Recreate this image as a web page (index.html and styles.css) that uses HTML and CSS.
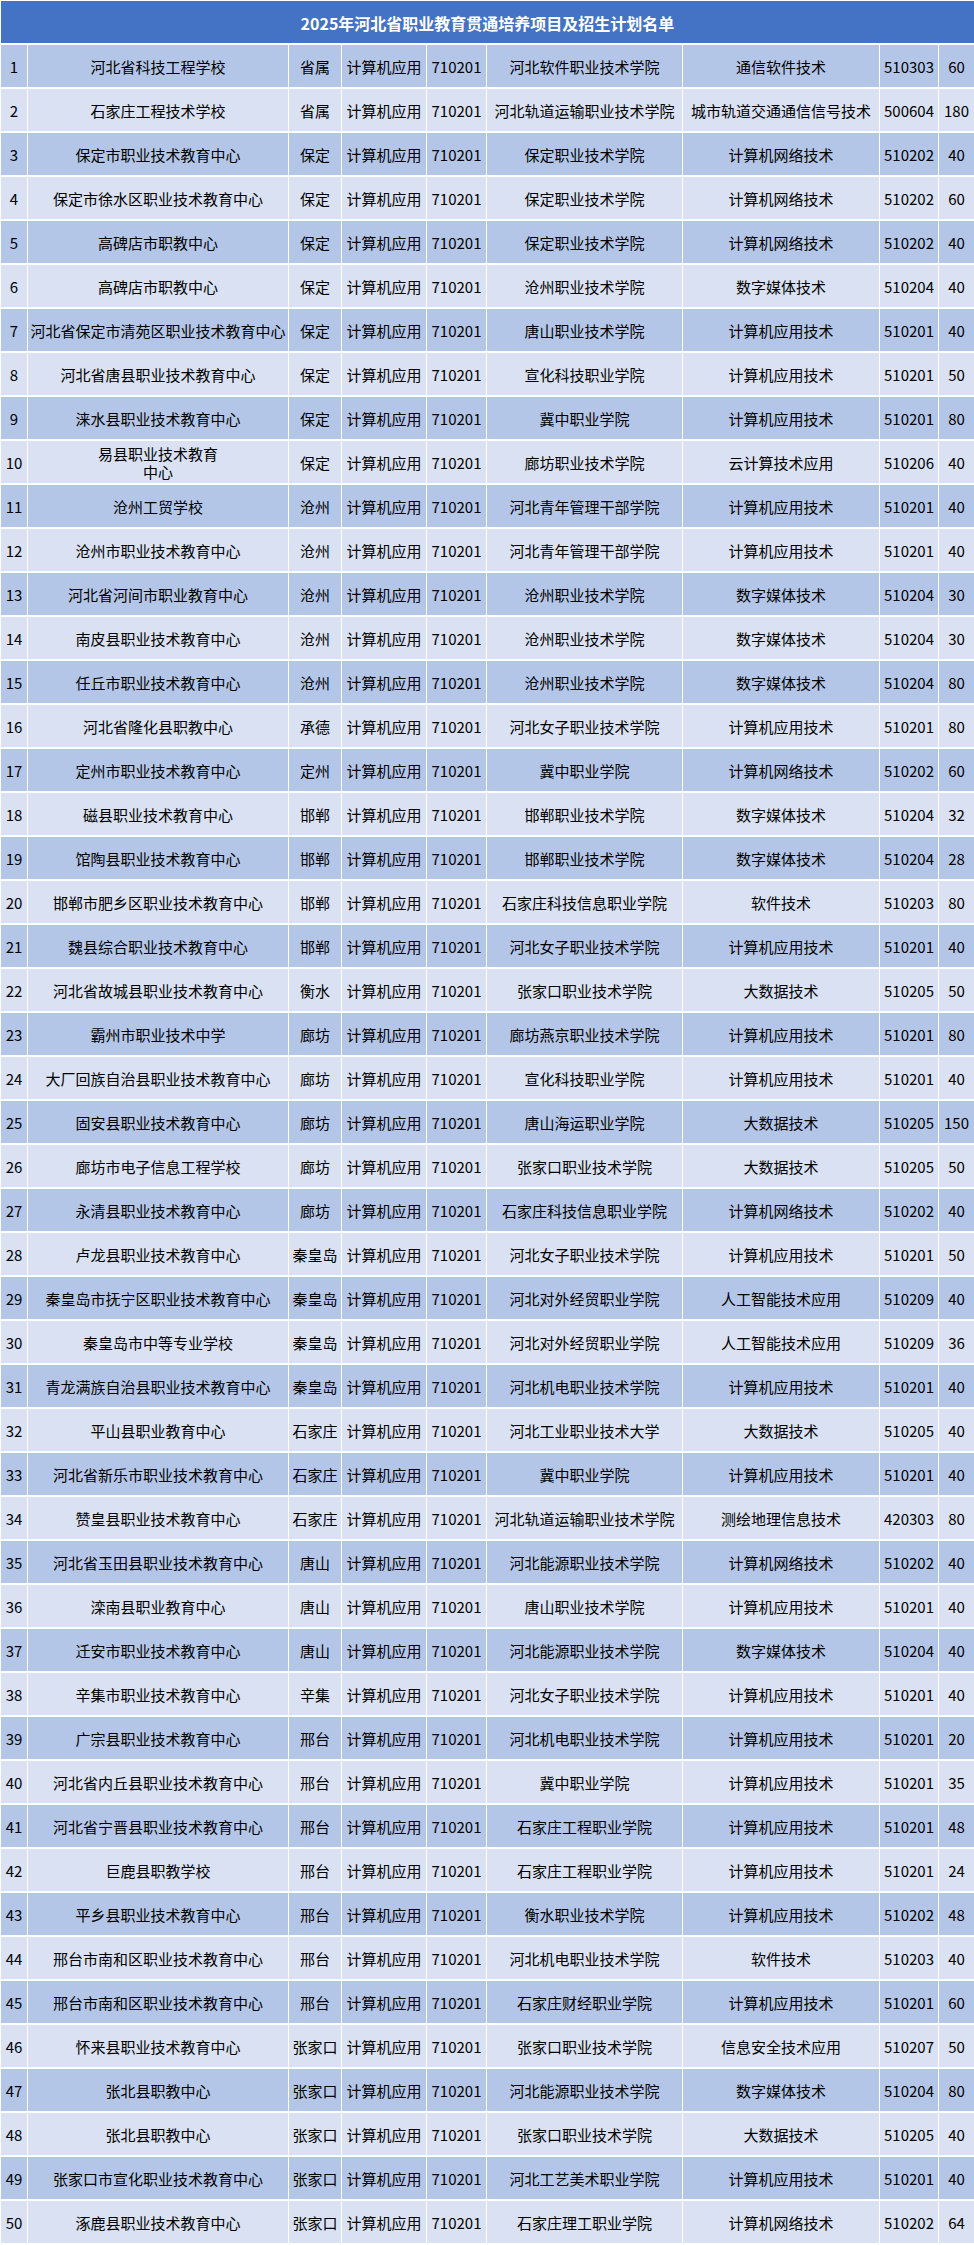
FILE: index.html
```html
<!DOCTYPE html>
<html lang="zh-CN">
<head>
<meta charset="utf-8">
<title>2025年河北省职业教育贯通培养项目及招生计划名单</title>
<link rel="stylesheet" href="styles.css">
</head>
<body>
<div class="sheet">
  <div class="title">2025年河北省职业教育贯通培养项目及招生计划名单</div>
  <div class="row odd"><div>1</div><div>河北省科技工程学校</div><div>省属</div><div>计算机应用</div><div>710201</div><div>河北软件职业技术学院</div><div>通信软件技术</div><div>510303</div><div>60</div></div>
  <div class="row even"><div>2</div><div>石家庄工程技术学校</div><div>省属</div><div>计算机应用</div><div>710201</div><div>河北轨道运输职业技术学院</div><div>城市轨道交通通信信号技术</div><div>500604</div><div>180</div></div>
  <div class="row odd"><div>3</div><div>保定市职业技术教育中心</div><div>保定</div><div>计算机应用</div><div>710201</div><div>保定职业技术学院</div><div>计算机网络技术</div><div>510202</div><div>40</div></div>
  <div class="row even"><div>4</div><div>保定市徐水区职业技术教育中心</div><div>保定</div><div>计算机应用</div><div>710201</div><div>保定职业技术学院</div><div>计算机网络技术</div><div>510202</div><div>60</div></div>
  <div class="row odd"><div>5</div><div>高碑店市职教中心</div><div>保定</div><div>计算机应用</div><div>710201</div><div>保定职业技术学院</div><div>计算机网络技术</div><div>510202</div><div>40</div></div>
  <div class="row even"><div>6</div><div>高碑店市职教中心</div><div>保定</div><div>计算机应用</div><div>710201</div><div>沧州职业技术学院</div><div>数字媒体技术</div><div>510204</div><div>40</div></div>
  <div class="row odd"><div>7</div><div>河北省保定市清苑区职业技术教育中心</div><div>保定</div><div>计算机应用</div><div>710201</div><div>唐山职业技术学院</div><div>计算机应用技术</div><div>510201</div><div>40</div></div>
  <div class="row even"><div>8</div><div>河北省唐县职业技术教育中心</div><div>保定</div><div>计算机应用</div><div>710201</div><div>宣化科技职业学院</div><div>计算机应用技术</div><div>510201</div><div>50</div></div>
  <div class="row odd"><div>9</div><div>涞水县职业技术教育中心</div><div>保定</div><div>计算机应用</div><div>710201</div><div>冀中职业学院</div><div>计算机应用技术</div><div>510201</div><div>80</div></div>
  <div class="row even"><div>10</div><div>易县职业技术教育<br>中心</div><div>保定</div><div>计算机应用</div><div>710201</div><div>廊坊职业技术学院</div><div>云计算技术应用</div><div>510206</div><div>40</div></div>
  <div class="row odd"><div>11</div><div>沧州工贸学校</div><div>沧州</div><div>计算机应用</div><div>710201</div><div>河北青年管理干部学院</div><div>计算机应用技术</div><div>510201</div><div>40</div></div>
  <div class="row even"><div>12</div><div>沧州市职业技术教育中心</div><div>沧州</div><div>计算机应用</div><div>710201</div><div>河北青年管理干部学院</div><div>计算机应用技术</div><div>510201</div><div>40</div></div>
  <div class="row odd"><div>13</div><div>河北省河间市职业教育中心</div><div>沧州</div><div>计算机应用</div><div>710201</div><div>沧州职业技术学院</div><div>数字媒体技术</div><div>510204</div><div>30</div></div>
  <div class="row even"><div>14</div><div>南皮县职业技术教育中心</div><div>沧州</div><div>计算机应用</div><div>710201</div><div>沧州职业技术学院</div><div>数字媒体技术</div><div>510204</div><div>30</div></div>
  <div class="row odd"><div>15</div><div>任丘市职业技术教育中心</div><div>沧州</div><div>计算机应用</div><div>710201</div><div>沧州职业技术学院</div><div>数字媒体技术</div><div>510204</div><div>80</div></div>
  <div class="row even"><div>16</div><div>河北省隆化县职教中心</div><div>承德</div><div>计算机应用</div><div>710201</div><div>河北女子职业技术学院</div><div>计算机应用技术</div><div>510201</div><div>80</div></div>
  <div class="row odd"><div>17</div><div>定州市职业技术教育中心</div><div>定州</div><div>计算机应用</div><div>710201</div><div>冀中职业学院</div><div>计算机网络技术</div><div>510202</div><div>60</div></div>
  <div class="row even"><div>18</div><div>磁县职业技术教育中心</div><div>邯郸</div><div>计算机应用</div><div>710201</div><div>邯郸职业技术学院</div><div>数字媒体技术</div><div>510204</div><div>32</div></div>
  <div class="row odd"><div>19</div><div>馆陶县职业技术教育中心</div><div>邯郸</div><div>计算机应用</div><div>710201</div><div>邯郸职业技术学院</div><div>数字媒体技术</div><div>510204</div><div>28</div></div>
  <div class="row even"><div>20</div><div>邯郸市肥乡区职业技术教育中心</div><div>邯郸</div><div>计算机应用</div><div>710201</div><div>石家庄科技信息职业学院</div><div>软件技术</div><div>510203</div><div>80</div></div>
  <div class="row odd"><div>21</div><div>魏县综合职业技术教育中心</div><div>邯郸</div><div>计算机应用</div><div>710201</div><div>河北女子职业技术学院</div><div>计算机应用技术</div><div>510201</div><div>40</div></div>
  <div class="row even"><div>22</div><div>河北省故城县职业技术教育中心</div><div>衡水</div><div>计算机应用</div><div>710201</div><div>张家口职业技术学院</div><div>大数据技术</div><div>510205</div><div>50</div></div>
  <div class="row odd"><div>23</div><div>霸州市职业技术中学</div><div>廊坊</div><div>计算机应用</div><div>710201</div><div>廊坊燕京职业技术学院</div><div>计算机应用技术</div><div>510201</div><div>80</div></div>
  <div class="row even"><div>24</div><div>大厂回族自治县职业技术教育中心</div><div>廊坊</div><div>计算机应用</div><div>710201</div><div>宣化科技职业学院</div><div>计算机应用技术</div><div>510201</div><div>40</div></div>
  <div class="row odd"><div>25</div><div>固安县职业技术教育中心</div><div>廊坊</div><div>计算机应用</div><div>710201</div><div>唐山海运职业学院</div><div>大数据技术</div><div>510205</div><div>150</div></div>
  <div class="row even"><div>26</div><div>廊坊市电子信息工程学校</div><div>廊坊</div><div>计算机应用</div><div>710201</div><div>张家口职业技术学院</div><div>大数据技术</div><div>510205</div><div>50</div></div>
  <div class="row odd"><div>27</div><div>永清县职业技术教育中心</div><div>廊坊</div><div>计算机应用</div><div>710201</div><div>石家庄科技信息职业学院</div><div>计算机网络技术</div><div>510202</div><div>40</div></div>
  <div class="row even"><div>28</div><div>卢龙县职业技术教育中心</div><div>秦皇岛</div><div>计算机应用</div><div>710201</div><div>河北女子职业技术学院</div><div>计算机应用技术</div><div>510201</div><div>50</div></div>
  <div class="row odd"><div>29</div><div>秦皇岛市抚宁区职业技术教育中心</div><div>秦皇岛</div><div>计算机应用</div><div>710201</div><div>河北对外经贸职业学院</div><div>人工智能技术应用</div><div>510209</div><div>40</div></div>
  <div class="row even"><div>30</div><div>秦皇岛市中等专业学校</div><div>秦皇岛</div><div>计算机应用</div><div>710201</div><div>河北对外经贸职业学院</div><div>人工智能技术应用</div><div>510209</div><div>36</div></div>
  <div class="row odd"><div>31</div><div>青龙满族自治县职业技术教育中心</div><div>秦皇岛</div><div>计算机应用</div><div>710201</div><div>河北机电职业技术学院</div><div>计算机应用技术</div><div>510201</div><div>40</div></div>
  <div class="row even"><div>32</div><div>平山县职业教育中心</div><div>石家庄</div><div>计算机应用</div><div>710201</div><div>河北工业职业技术大学</div><div>大数据技术</div><div>510205</div><div>40</div></div>
  <div class="row odd"><div>33</div><div>河北省新乐市职业技术教育中心</div><div>石家庄</div><div>计算机应用</div><div>710201</div><div>冀中职业学院</div><div>计算机应用技术</div><div>510201</div><div>40</div></div>
  <div class="row even"><div>34</div><div>赞皇县职业技术教育中心</div><div>石家庄</div><div>计算机应用</div><div>710201</div><div>河北轨道运输职业技术学院</div><div>测绘地理信息技术</div><div>420303</div><div>80</div></div>
  <div class="row odd"><div>35</div><div>河北省玉田县职业技术教育中心</div><div>唐山</div><div>计算机应用</div><div>710201</div><div>河北能源职业技术学院</div><div>计算机网络技术</div><div>510202</div><div>40</div></div>
  <div class="row even"><div>36</div><div>滦南县职业教育中心</div><div>唐山</div><div>计算机应用</div><div>710201</div><div>唐山职业技术学院</div><div>计算机应用技术</div><div>510201</div><div>40</div></div>
  <div class="row odd"><div>37</div><div>迁安市职业技术教育中心</div><div>唐山</div><div>计算机应用</div><div>710201</div><div>河北能源职业技术学院</div><div>数字媒体技术</div><div>510204</div><div>40</div></div>
  <div class="row even"><div>38</div><div>辛集市职业技术教育中心</div><div>辛集</div><div>计算机应用</div><div>710201</div><div>河北女子职业技术学院</div><div>计算机应用技术</div><div>510201</div><div>40</div></div>
  <div class="row odd"><div>39</div><div>广宗县职业技术教育中心</div><div>邢台</div><div>计算机应用</div><div>710201</div><div>河北机电职业技术学院</div><div>计算机应用技术</div><div>510201</div><div>20</div></div>
  <div class="row even"><div>40</div><div>河北省内丘县职业技术教育中心</div><div>邢台</div><div>计算机应用</div><div>710201</div><div>冀中职业学院</div><div>计算机应用技术</div><div>510201</div><div>35</div></div>
  <div class="row odd"><div>41</div><div>河北省宁晋县职业技术教育中心</div><div>邢台</div><div>计算机应用</div><div>710201</div><div>石家庄工程职业学院</div><div>计算机应用技术</div><div>510201</div><div>48</div></div>
  <div class="row even"><div>42</div><div>巨鹿县职教学校</div><div>邢台</div><div>计算机应用</div><div>710201</div><div>石家庄工程职业学院</div><div>计算机应用技术</div><div>510201</div><div>24</div></div>
  <div class="row odd"><div>43</div><div>平乡县职业技术教育中心</div><div>邢台</div><div>计算机应用</div><div>710201</div><div>衡水职业技术学院</div><div>计算机应用技术</div><div>510202</div><div>48</div></div>
  <div class="row even"><div>44</div><div>邢台市南和区职业技术教育中心</div><div>邢台</div><div>计算机应用</div><div>710201</div><div>河北机电职业技术学院</div><div>软件技术</div><div>510203</div><div>40</div></div>
  <div class="row odd"><div>45</div><div>邢台市南和区职业技术教育中心</div><div>邢台</div><div>计算机应用</div><div>710201</div><div>石家庄财经职业学院</div><div>计算机应用技术</div><div>510201</div><div>60</div></div>
  <div class="row even"><div>46</div><div>怀来县职业技术教育中心</div><div>张家口</div><div>计算机应用</div><div>710201</div><div>张家口职业技术学院</div><div>信息安全技术应用</div><div>510207</div><div>50</div></div>
  <div class="row odd"><div>47</div><div>张北县职教中心</div><div>张家口</div><div>计算机应用</div><div>710201</div><div>河北能源职业技术学院</div><div>数字媒体技术</div><div>510204</div><div>80</div></div>
  <div class="row even"><div>48</div><div>张北县职教中心</div><div>张家口</div><div>计算机应用</div><div>710201</div><div>张家口职业技术学院</div><div>大数据技术</div><div>510205</div><div>40</div></div>
  <div class="row odd"><div>49</div><div>张家口市宣化职业技术教育中心</div><div>张家口</div><div>计算机应用</div><div>710201</div><div>河北工艺美术职业学院</div><div>计算机应用技术</div><div>510201</div><div>40</div></div>
  <div class="row even"><div>50</div><div>涿鹿县职业技术教育中心</div><div>张家口</div><div>计算机应用</div><div>710201</div><div>石家庄理工职业学院</div><div>计算机网络技术</div><div>510202</div><div>64</div></div>
</div>
</body>
</html>
```

FILE: styles.css
```css
html, body {
  margin: 0;
  padding: 0;
  background: #ffffff;
}

body {
  font-family: "Noto Sans CJK SC", "Noto Sans", sans-serif;
  font-size: 15px;
  color: #000000;
}

.sheet {
  width: 974px;
  box-sizing: border-box;
  padding: 1px 0 0 1px;
  display: flex;
  flex-direction: column;
  gap: 2px;
  background: #ffffff;
}

.title {
  height: 42px;
  background: #4472c4;
  color: #ffffff;
  font-size: 16px;
  font-weight: bold;
  display: flex;
  align-items: center;
  justify-content: center;
  padding-top: 2px;
  box-sizing: border-box;
}

.row {
  display: grid;
  grid-template-columns: 26px 260px 52px 84px 59px 195px 196px 58px 35px;
  column-gap: 1px;
  height: 42px;
}

.row > div {
  display: flex;
  align-items: center;
  justify-content: center;
  text-align: center;
  line-height: 18px;
  padding-top: 2px;
  box-sizing: border-box;
  white-space: nowrap;
  overflow: hidden;
}

.odd > div {
  background: #b4c6e7;
}

.even > div {
  background: #d9e1f2;
}
```
